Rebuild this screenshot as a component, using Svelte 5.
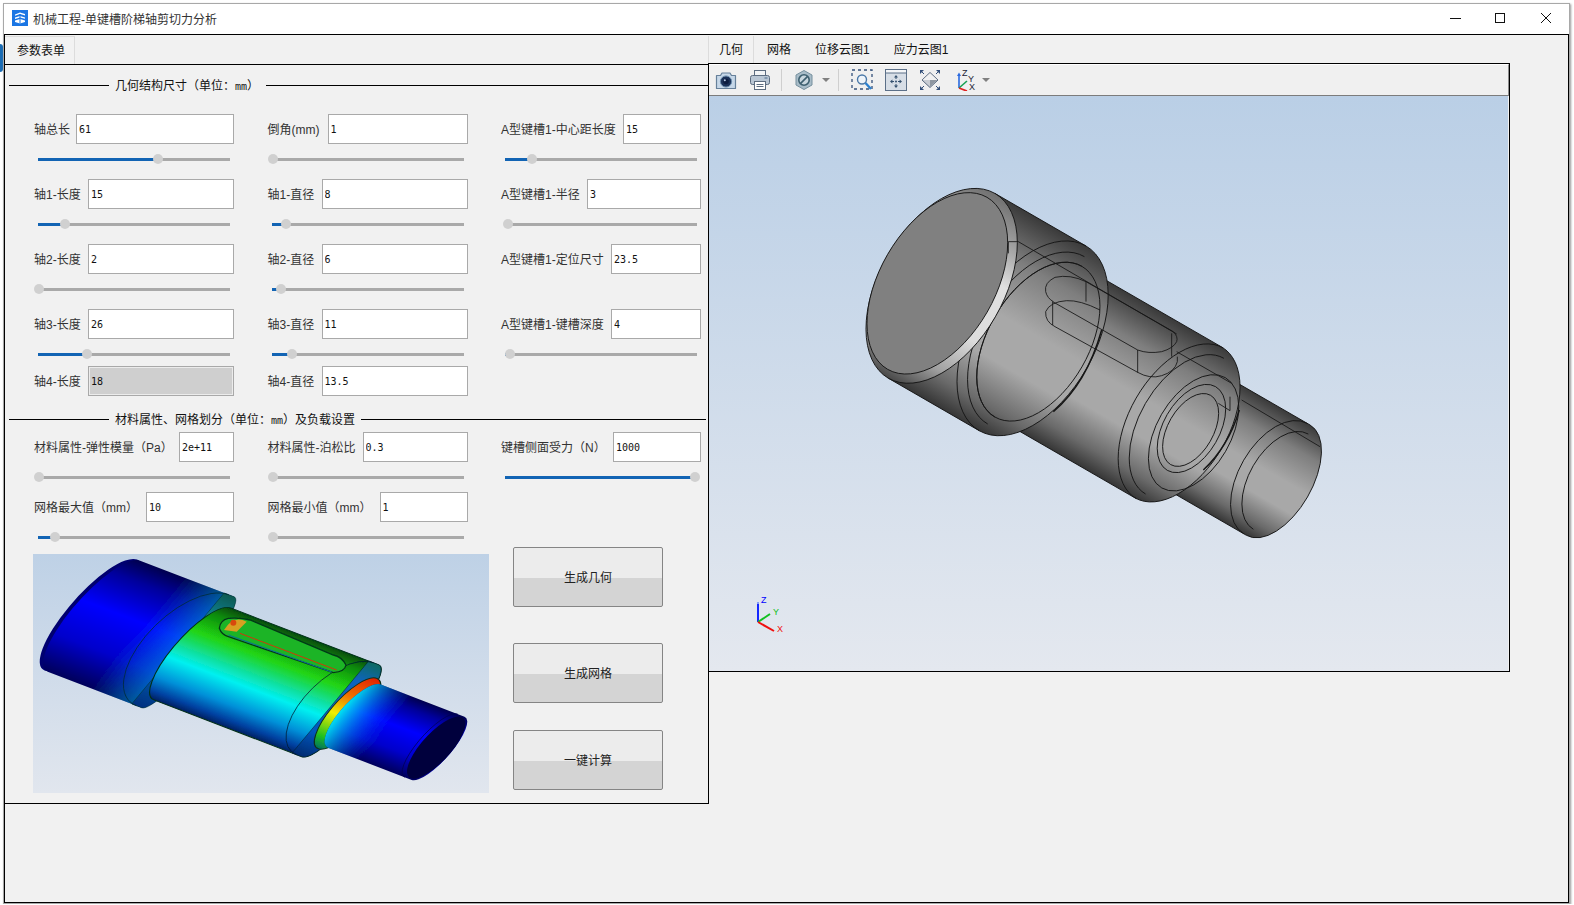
<script lang="ts">
  type Field = { label: string; value: string; input: number; pos?: number; disabled?: boolean };

  const geometryRows: Field[][] = [
    [
      { label: '轴总长', value: '61', input: 158, pos: 124 },
      { label: '倒角(mm)', value: '1', input: 140, pos: 5 },
      { label: 'A型键槽1-中心距长度', value: '15', input: 78, pos: 31 }
    ],
    [
      { label: '轴1-长度', value: '15', input: 146, pos: 31 },
      { label: '轴1-直径', value: '8', input: 146, pos: 18 },
      { label: 'A型键槽1-半径', value: '3', input: 114, pos: 7 }
    ],
    [
      { label: '轴2-长度', value: '2', input: 146, pos: 5 },
      { label: '轴2-直径', value: '6', input: 146, pos: 13 },
      { label: 'A型键槽1-定位尺寸', value: '23.5', input: 90 }
    ],
    [
      { label: '轴3-长度', value: '26', input: 146, pos: 53 },
      { label: '轴3-直径', value: '11', input: 146, pos: 24 },
      { label: 'A型键槽1-键槽深度', value: '4', input: 90, pos: 9 }
    ]
  ];

  const lastRow: Field[] = [
    { label: '轴4-长度', value: '18', input: 146, disabled: true },
    { label: '轴4-直径', value: '13.5', input: 146 }
  ];

  const materialRows: Field[][] = [
    [
      { label: '材料属性-弹性模量（Pa）', value: '2e+11', input: 55, pos: 5 },
      { label: '材料属性-泊松比', value: '0.3', input: 105, pos: 5 },
      { label: '键槽侧面受力（N）', value: '1000', input: 88, pos: 194 }
    ],
    [
      { label: '网格最大值（mm）', value: '10', input: 88, pos: 21 },
      { label: '网格最小值（mm）', value: '1', input: 88, pos: 5 }
    ]
  ];

  const viewTabs = ['几何', '网格', '位移云图1', '应力云图1'];
  const actions = ['生成几何', '生成网格', '一键计算'];

  // cylinder section in the rotated frame of the model, with a convex far end
  const section = (x0: number, x1: number, r: number, k = 0.58) =>
    `M${x0} ${-r}L${x1} ${-r}A${k * r} ${r} 0 0 1 ${x1} ${r}L${x0} ${r}Z`;
  const seam = (cx: number, r: number) => `M${cx} ${-r}A${0.58 * r} ${r} 0 0 0 ${cx} ${r}`;
</script>

{#snippet field(f: Field)}
  <div class="field">
    <div class="entry">
      <span class="label">{f.label}</span>
      <input class:off={f.disabled} value={f.value} readonly style="width:{f.input}px" />
    </div>
    {#if f.pos !== undefined}
      <div class="slider">
        <div class="track"><div class="fill" style="width:{f.pos - 5}px"></div></div>
        <div class="knob" style="left:{f.pos - 5}px"></div>
      </div>
    {/if}
  </div>
{/snippet}

<div class="blob"></div>
<div class="window">
  <header class="titlebar">
    <svg class="appicon" width="16" height="16" viewBox="0 0 16 16">
      <rect width="16" height="16" fill="#1b76e4" />
      <path d="M3 4.5 8 2.5l5 1.5v1.4L8 4 3 5.8zM3 7.5 8 6l5 1.4v1.4L8 7.4 3 9zM3 10.6 8 9l5 1.5v1.6L8 13.6 3 12z" fill="#fff" />
      <path d="M8 4v9.6" stroke="#1b76e4" stroke-width="1" />
    </svg>
    <span class="title">机械工程-单键槽阶梯轴剪切力分析</span>
    <div class="controls">
      <svg width="102" height="14" viewBox="0 0 102 14" fill="none" stroke="#111">
        <path d="M0 7.5H11" />
        <rect x="45.5" y="2.5" width="9" height="9" />
        <path d="M91 2l10 10M101 2 91 12" />
      </svg>
    </div>
  </header>

  <div class="client">
    <section class="left">
      <div class="tabbar"><div class="tab first">参数表单</div></div>
      <div class="pane">
        <div class="legend first-legend">
          <i></i><span>几何结构尺寸（单位：<b>mm</b>）</span><i></i>
        </div>
        {#each geometryRows as row, i}
          <div class="row" class:tight={i === 3}>
            {#each row as f}{@render field(f)}{/each}
          </div>
        {/each}
        <div class="row flat">
          {#each lastRow as f}{@render field(f)}{/each}
        </div>

        <div class="legend second-legend">
          <i></i><span>材料属性、网格划分（单位：<b>mm</b>）及负载设置</span><i></i>
        </div>
        <div class="row mat">
          {#each materialRows[0] as f}{@render field(f)}{/each}
        </div>
        <div class="row flat">
          {#each materialRows[1] as f}{@render field(f)}{/each}
        </div>

        <div class="bottom">
          <svg class="contour" viewBox="39 42 1368 717" width="456" height="239">
            <defs>
              <linearGradient id="bg2" x1="0" y1="0" x2="0" y2="1">
                <stop offset="0" stop-color="#bed1e6" />
                <stop offset="1" stop-color="#e1e6ee" />
              </linearGradient>
              <linearGradient id="c1" x1="0" y1="0" x2="0" y2="1">
                <stop offset="0" stop-color="#00004e" />
                <stop offset=".15" stop-color="#00009c" />
                <stop offset=".42" stop-color="#0000ff" />
                <stop offset=".72" stop-color="#0006cc" />
                <stop offset="1" stop-color="#00005a" />
              </linearGradient>
              <linearGradient id="c1x" x1="0" y1="0" x2="1" y2="0">
                <stop offset=".5" stop-color="#00c0e0" stop-opacity="0" />
                <stop offset="1" stop-color="#00c8e0" stop-opacity=".7" />
              </linearGradient>
              <linearGradient id="c2" x1="0" y1="0" x2="0" y2="1">
                <stop offset="0" stop-color="#064a10" />
                <stop offset=".1" stop-color="#0a8a10" />
                <stop offset=".3" stop-color="#22d412" />
                <stop offset=".48" stop-color="#10e0a0" />
                <stop offset=".6" stop-color="#00f0f0" />
                <stop offset=".8" stop-color="#0090d8" />
                <stop offset=".93" stop-color="#0040a0" />
                <stop offset="1" stop-color="#002060" />
              </linearGradient>
              <linearGradient id="c3x" x1="0" y1="0" x2="1" y2="0">
                <stop offset="0" stop-color="#00f0f0" stop-opacity=".95" />
                <stop offset=".42" stop-color="#0040ff" stop-opacity="0" />
              </linearGradient>
              <linearGradient id="cr" x1="0" y1="0" x2="0" y2="1">
                <stop offset="0" stop-color="#e02000" />
                <stop offset=".3" stop-color="#f07000" />
                <stop offset=".55" stop-color="#f0f000" />
                <stop offset=".85" stop-color="#20c020" />
                <stop offset="1" stop-color="#007060" />
              </linearGradient>
              <linearGradient id="cap" x1="0" y1="0" x2="0" y2="1">
                <stop offset="0" stop-color="#0a5a50" />
                <stop offset=".25" stop-color="#0f8aa8" />
                <stop offset=".6" stop-color="#0870c0" />
                <stop offset="1" stop-color="#003080" />
              </linearGradient>
              <linearGradient id="cap2" x1="0" y1="0" x2="0" y2="1">
                <stop offset="0" stop-color="#0a6a60" />
                <stop offset=".2" stop-color="#0a64c0" />
                <stop offset=".75" stop-color="#0558c0" />
                <stop offset="1" stop-color="#002a70" />
              </linearGradient>
              <filter id="soft"><feGaussianBlur stdDeviation="1.2" /></filter>
            </defs>
            <rect x="39" y="42" width="1368" height="717" fill="url(#bg2)" />
            <g filter="url(#soft)">
              <g transform="translate(700 350) rotate(21) translate(0 58) skewX(-18.8)">
                <ellipse cx="-500" cy="0" rx="70" ry="205" fill="#000070" />
                <path d="M-490 -205L-190 -205A42 205 0 0 1 -190 205L-490 205A68 205 0 0 1 -490 -205Z" fill="url(#c1)" />
                <path d="M-490 -205L-190 -205A42 205 0 0 1 -190 205L-490 205A68 205 0 0 1 -490 -205Z" fill="url(#c1x)" />
                <path d={section(-220, -188, 205, 0.2)} fill="url(#cap)" stroke="#063030" stroke-width="1.5" />
                <path d={seam(-205, 205)} fill="none" stroke="#042a30" stroke-width="2" />
                <path d="M-174 -170A60 170 0 0 0 -174 170L302 170A45 170 0 0 0 302 -170Z" fill="url(#c2)" stroke="#043018" stroke-width="3" />
                <path d={section(270, 302, 170, 0.26)} fill="url(#cap2)" stroke="#032030" stroke-width="1.5" />
                <path d={seam(285, 170)} fill="none" stroke="#031a30" stroke-width="2" />
                <ellipse cx="325" cy="0" rx="50" ry="130" fill="url(#cr)" stroke="#103018" stroke-width="3" />
                <path d="M347 -117A45 117 0 0 0 347 117L616 117A40 117 0 0 0 616 -117Z" fill="url(#c1)" />
                <path d="M347 -117A45 117 0 0 0 347 117L616 117A40 117 0 0 0 616 -117Z" fill="url(#c3x)" />
                <ellipse cx="610" cy="0" rx="46" ry="113" fill="#00003c" />
                <path d="M594 -117A40 117 0 0 0 594 117" fill="none" stroke="#000050" stroke-width="2" />
              </g>
              <path d="M625 235Q600 240 598 265Q605 285 625 290L940 398Q975 395 978 375Q965 350 940 345L690 240Q660 232 625 235Z" fill="#1cb428" stroke="#053a18" stroke-width="4" />
              <path d="M612 270Q640 225 680 245L650 275Z" fill="#d8a020" />
              <circle cx="640" cy="248" r="9" fill="#d84a10" />
              <path d="M625 285L935 396" stroke="#0a6a9a" stroke-width="3" fill="none" />
              <path d="M660 280L950 390" stroke="#d03808" stroke-width="3" fill="none" />
            </g>
          </svg>
          <div class="actions">
            {#each actions as a}
              <button>{a}</button>
            {/each}
          </div>
        </div>
      </div>
    </section>

    <section class="right">
      <div class="tabbar rtabs">
        {#each viewTabs as t, i}
          <div class="tab" class:active={i === 0}>{t}</div>
        {/each}
      </div>
      <div class="viewer">
        <div class="toolbar">
          <div class="tgroup">
            <svg width="22" height="22" viewBox="0 0 22 22">
              <path d="M1.5 6.5h4l1.5-2.5h8l1.5 2.5h4v13h-19z" fill="#c6d7e8" stroke="#66809a" stroke-width="1.2" stroke-linejoin="round" />
              <circle cx="11" cy="12.5" r="5.6" fill="#1b3158" stroke="#6e90b0" />
              <circle cx="11" cy="12.5" r="2.8" fill="#0c1c40" />
              <circle cx="9.8" cy="11.2" r="1" fill="#b8cce8" />
            </svg>
            <svg width="22" height="22" viewBox="0 0 22 22">
              <rect x="5.5" y="1.5" width="11" height="6" fill="#f2f4f6" stroke="#5c6c80" />
              <rect x="1.5" y="6.5" width="19" height="9" rx="2" fill="#b9c6d4" stroke="#5c6c80" />
              <rect x="5.5" y="12.5" width="11" height="8" fill="#fff" stroke="#5c6c80" />
              <path d="M7.5 15.5h7M7.5 17.5h7" stroke="#5c6c80" />
              <path d="M15.5 9h3" stroke="#4a6a8a" />
            </svg>
          </div>
          <i class="sep"></i>
          <div class="tgroup narrow">
            <svg width="18" height="22" viewBox="0 0 18 22">
              <path d="M9 1.5 17 6v10l-8 4.5L1 16V6z" fill="#a8bcc8" stroke="#76909e" />
              <circle cx="9" cy="11" r="5.2" fill="#c8d6de" stroke="#3e6070" stroke-width="1.6" />
              <path d="M5.6 14.4 12.4 7.6" stroke="#3e6070" stroke-width="1.6" />
            </svg>
            <i class="caret"></i>
          </div>
          <i class="sep"></i>
          <div class="tgroup">
            <svg width="22" height="22" viewBox="0 0 22 22" fill="none">
              <rect x="1" y="1" width="20" height="19" stroke="#34507a" stroke-width="1.3" stroke-dasharray="3 3" />
              <circle cx="11" cy="10.5" r="4.5" fill="#eef4fa" stroke="#4a78a8" stroke-width="1.4" />
              <path d="M14.5 14 20 20" stroke="#2a80d0" stroke-width="2.4" />
            </svg>
            <svg width="22" height="22" viewBox="0 0 22 22">
              <rect x=".5" y=".5" width="21" height="21" fill="#d7dee6" stroke="#5c7088" />
              <rect x="1" y="1" width="20" height="3" fill="#f4f6f8" />
              <path d="M1 4h20" stroke="#5c7088" />
              <path d="M11 6l2 2.4H9zM11 19l-2-2.4h4zM5 12.5l2.4-2v4zM17 12.5l-2.4 2v-4z" fill="#34506e" />
              <path d="M11 8v2M11 15v2M7 12.5h2M13 12.5h2" stroke="#34506e" />
              <circle cx="11" cy="12.5" r="1" fill="#34506e" />
            </svg>
            <svg width="22" height="22" viewBox="0 0 22 22">
              <path d="M11 3.5 19 11 11 18.5 3 11z" fill="#c8ccd2" stroke="#5a6a80" />
              <path d="M3.6 11 11 4.2 18.4 11z" fill="#f2f2f2" />
              <path d="M11 11 18.4 11 11 17.8z" fill="#8e96a0" />
              <path d="M1 5V1h4zM21 5V1h-4zM1 17v4h4zM21 17v4h-4z" fill="#34507a" />
              <path d="M2 2l3 3M20 2l-3 3M2 20l3-3M20 20l-3-3" stroke="#34507a" />
            </svg>
            <svg class="axes" width="20" height="22" viewBox="0 0 20 22">
              <path d="M3 19V6" stroke="#2a6ae0" stroke-width="1.6" />
              <path d="M3 3.5 1 7h4z" fill="#2a6ae0" />
              <path d="M3 19 11 12" stroke="#18a050" stroke-width="1.6" />
              <path d="M3 19 11 22" stroke="#e02020" stroke-width="1.8" />
              <text x="6" y="7" class="axlabel" fill="#223">Z</text>
              <text x="12" y="13" class="axlabel" fill="#223">Y</text>
              <text x="13" y="21" class="axlabel" fill="#223">X</text>
            </svg>
            <i class="caret tail"></i>
          </div>
        </div>

        <svg class="viewport" viewBox="709 96 799 575" width="799" height="575">
          <defs>
            <linearGradient id="bg" x1="0" y1="0" x2="0" y2="1">
              <stop offset="0" stop-color="#bacfe6" />
              <stop offset="1" stop-color="#e4e8ef" />
            </linearGradient>
            <linearGradient id="steel" x1="0" y1="0" x2="0" y2="1">
              <stop offset="0" stop-color="#3a3a3a" />
              <stop offset=".22" stop-color="#7e7e7e" />
              <stop offset=".48" stop-color="#a8a8a8" />
              <stop offset=".68" stop-color="#a8a8a8" />
              <stop offset=".88" stop-color="#6a6a6a" />
              <stop offset="1" stop-color="#363636" />
            </linearGradient>
            <linearGradient id="chamfer" x1="0" y1="0" x2="0" y2="1">
              <stop offset="0" stop-color="#707070" />
              <stop offset=".2" stop-color="#a8a8a8" />
              <stop offset=".36" stop-color="#e0e0e0" />
              <stop offset=".65" stop-color="#dcdcdc" />
              <stop offset=".85" stop-color="#a0a0a0" />
              <stop offset="1" stop-color="#484848" />
            </linearGradient>
          </defs>
          <rect x="709" y="96" width="799" height="575" fill="url(#bg)" />

          <g transform="translate(840 170) scale(.33333)">
            <g transform="translate(292 340) rotate(30)" fill="none" stroke="#161616" stroke-width="2.6">
              <path d={section(800, 1181, 191, 0.53)} fill="url(#steel)" />
              <path d={seam(1172, 191)} />
              <path d={seam(1190, 165)} />

              <path d={section(420, 835, 261)} fill="url(#steel)" />
              <path d={seam(840, 261)} />
              <path d={seam(857, 235)} />
              <ellipse cx="890" cy="4" rx="111" ry="191" />
              <ellipse cx="878" cy="-4" rx="84" ry="145" />
              <ellipse cx="878" cy="1" rx="68" ry="120" />

              <path d={section(15, 330, 320)} fill="url(#steel)" />
              <path d={seam(330, 320)} />
              <path d={seam(342, 290)} />
              <path d={seam(350, 261)} />
              <ellipse cx="350" cy="0" rx="151" ry="261" />
              <ellipse cx="15" cy="0" rx="186" ry="320" fill="url(#chamfer)" />
              <ellipse cx="0" cy="0" rx="172.6" ry="298" fill="#808080" />
            </g>
            <g fill="none" stroke="#161616" stroke-width="2.6">
              <path d="M738 335Q690 312 645 322Q612 338 617 365Q622 385 640 395" />
              <path d="M638 395L893 540M738 335L1000 485Q1015 500 1010 515Q1000 535 965 545Q925 552 893 540" />
              <path d="M780 420Q720 390 680 392Q630 395 617 425Q615 455 645 470L893 607Q930 628 965 617Q1005 605 1012 575V560" />
              <path d="M738 335V395M638 395V465M893 540V608M995 490V560" />
              <path d="M505 215H535L1010 492M1010 545 1175 640M1135 700 1170 722V680M1205 690 1440 830M505 215V250" />
              <path d="M785 480Q740 640 640 725M1198 720Q1165 830 1090 900" stroke-width="4.5" />
            </g>
          </g>

          <path d="M758 622V604" stroke="#0000ff" stroke-width="2" />
          <path d="M758 622V602" stroke="#2a50ff" stroke-width="1" />
          <path d="M758 622 770 614" stroke="#10c020" stroke-width="2" />
          <path d="M758 622 774 631" stroke="#f01010" stroke-width="2" />
          <text x="761" y="603" class="axlabel" fill="#0000ff">Z</text>
          <text x="773" y="615" class="axlabel" fill="#10c020">Y</text>
          <text x="777" y="632" class="axlabel" fill="#f01010">X</text>
        </svg>
      </div>
    </section>
  </div>
</div>

<style>
  :global(body) {
    margin: 0;
    background: #fff;
    overflow: hidden;
    font-family: 'Liberation Sans', 'Noto Sans CJK SC', sans-serif;
    font-size: 12px;
    color: #222;
  }

  .blob {
    position: absolute;
    left: 0;
    top: 44px;
    width: 3px;
    height: 28px;
    background: #1a6cb4;
    border-radius: 0 14px 14px 0;
  }

  .window {
    position: relative;
    box-sizing: border-box;
    width: 1567px;
    height: 901px;
    margin: 3px 0 0 3px;
    border: 1px solid #a8a8a8;
    box-shadow: 1px 1px 2px #999;
    display: flex;
    flex-direction: column;
    background: #fff;
  }

  .titlebar {
    box-sizing: border-box;
    height: 30px;
    display: flex;
    align-items: center;
    padding: 0 0 2px 8px;
    flex: none;
  }

  .appicon {
    margin-right: 5px;
  }

  .title {
    color: #333;
  }

  .controls {
    margin-left: auto;
    margin-right: 17px;
    display: flex;
  }

  .client {
    box-sizing: border-box;
    height: 869px;
    border: 1px solid #000;
    background: #f1f1f1;
    display: flex;
    align-items: flex-start;
  }

  .tabbar {
    height: 29px;
    display: flex;
    align-items: flex-end;
    box-sizing: border-box;
  }

  .tab {
    height: 28px;
    line-height: 28px;
    padding: 0 12px;
    box-sizing: border-box;
    color: #111;
    white-space: nowrap;
  }

  .tab.first {
    width: 70px;
    border-top: 1px solid #dcdcdc;
    border-right: 1px solid #dcdcdc;
    background: #f2f2f2;
    line-height: 28px;
  }

  .left {
    width: 704px;
    flex: none;
  }

  .pane {
    box-sizing: border-box;
    height: 740px;
    border-top: 1px solid #000;
    border-right: 1px solid #000;
    border-bottom: 1px solid #000;
  }

  .legend {
    display: flex;
    align-items: center;
    height: 16px;
    color: #111;
    padding-left: 4px;
  }

  .legend i {
    height: 1px;
    background: #000;
    flex: 1;
  }

  .legend i:first-child {
    flex: none;
    width: 100px;
  }

  .legend span {
    margin: -2px 6px 0;
    white-space: nowrap;
  }

  .legend b {
    font: 10px 'DejaVu Sans Mono', monospace;
  }

  .first-legend {
    margin: 12px 0 21px;
  }

  .first-legend span {
    margin-right: 7px;
  }

  .second-legend {
    margin: 15px 2px 5px 0;
  }

  .row {
    display: grid;
    grid-template-columns: repeat(3, 200px);
    column-gap: 33.5px;
    padding-left: 29px;
    margin-bottom: 10px;
  }

  .row.tight {
    margin-bottom: 2px;
  }

  .row.flat {
    margin-bottom: 0;
  }

  .row.mat {
    margin-bottom: 5px;
  }

  .entry {
    display: flex;
    justify-content: space-between;
    align-items: center;
    height: 30px;
  }

  .label {
    color: #333;
    white-space: nowrap;
    margin-top: -2px;
  }

  input {
    box-sizing: border-box;
    height: 30px;
    border: 1px solid #a9a9a9;
    background: #fff;
    padding: 0 2px;
    margin: 0;
    font: 10px 'DejaVu Sans Mono', monospace;
    color: #111;
    outline: none;
    border-radius: 0;
  }

  input.off {
    background: #cfcfcf;
    box-shadow: inset 0 0 0 1px #ececec;
  }

  .slider {
    position: relative;
    height: 20px;
    margin-top: 5px;
    display: flex;
    align-items: center;
  }

  .track {
    width: 192px;
    height: 3px;
    margin-left: 4px;
    background: #a9a9a9;
  }

  .fill {
    height: 100%;
    background: #1264b4;
  }

  .knob {
    position: absolute;
    top: 5px;
    width: 10px;
    height: 10px;
    border-radius: 50%;
    background: #d0d0d0;
  }

  .bottom {
    display: flex;
    align-items: flex-start;
    padding-left: 28px;
  }

  .contour {
    display: block;
    margin-top: 7px;
    flex: none;
  }

  .actions {
    display: flex;
    flex-direction: column;
    gap: 36px;
    margin-left: 24px;
  }

  button {
    width: 150px;
    height: 60px;
    border: 1px solid #858585;
    border-radius: 2px;
    padding: 0 0 2px;
    background: linear-gradient(#ececec 0 51%, #d4d4d4 51% 100%);
    font: inherit;
    color: #222;
  }

  button:last-child {
    margin-top: -9px;
  }

  .right {
    flex: none;
    width: 802px;
    margin-left: -1px;
  }

  .rtabs {
    height: 28px;
  }

  .rtabs .tab {
    height: 27px;
    line-height: 29px;
  }

  .tab.active {
    background: #f2f2f2;
    border-right: 1px solid #dcdcdc;
    border-left: 1px solid #dcdcdc;
    padding: 0 10px;
    margin-right: 1px;
  }

  .viewer {
    box-sizing: border-box;
    height: 609px;
    border: 1px solid #000;
  }

  .toolbar {
    box-sizing: border-box;
    height: 32px;
    border-top: 1px solid #fff;
    border-bottom: 1px solid #7c7c7c;
    border-right: 1px solid #8c8c8c;
    display: flex;
    align-items: center;
    padding-left: 6px;
    background: #f0f0f0;
  }

  .tgroup {
    display: flex;
    align-items: center;
    gap: 12px;
  }

  .tgroup.narrow {
    gap: 9px;
    margin: 0 -2px 0 1px;
  }

  .sep {
    width: 1px;
    height: 22px;
    background: #cfcfcf;
    margin: 0 12px 0 10px;
  }

  .caret {
    width: 0;
    height: 0;
    border-left: 4px solid transparent;
    border-right: 4px solid transparent;
    border-top: 4px solid #808080;
  }

  .caret.tail {
    margin-left: -6px;
  }

  .axes {
    margin-left: 3px;
  }

  .axlabel {
    font: 9px 'Liberation Sans', sans-serif;
  }

  .viewport {
    display: block;
  }
</style>
